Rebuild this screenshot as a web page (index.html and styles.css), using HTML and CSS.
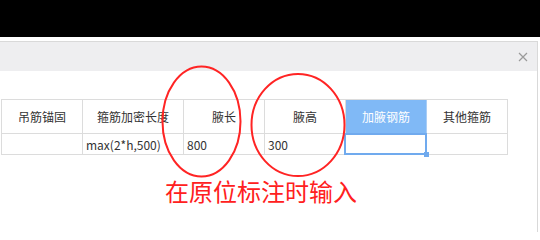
FILE: index.html
```html
<!DOCTYPE html>
<html lang="zh-CN">
<head>
<meta charset="utf-8">
<title>加腋钢筋</title>
<link rel="stylesheet" href="styles.css">
</head>
<body>
<div class="page">
  <div class="topbar"></div>
  <div class="dialog">
    <div class="titlebar">
      <svg class="close" width="10" height="10" viewBox="0 0 10 10"><path d="M1 1 L9 9 M9 1 L1 9" stroke="#9a9a9a" stroke-width="1.2" fill="none"/></svg>
    </div>
    <div class="body">
      <div class="grid">
        <div class="cell head">吊筋锚固</div>
        <div class="cell head">箍筋加密长度</div>
        <div class="cell head">腋长</div>
        <div class="cell head">腋高</div>
        <div class="cell head selected">加腋钢筋</div>
        <div class="cell head">其他箍筋</div>
        <div class="cell data"></div>
        <div class="cell data">max(2*h,500)</div>
        <div class="cell data">800</div>
        <div class="cell data">300</div>
        <div class="cell data active"></div>
        <div class="cell data"></div>
      </div>
      <div class="note">在原位标注时输入</div>
    </div>
  </div>
  <svg class="marks" width="540" height="232" viewBox="0 0 540 232">
    <ellipse cx="201.5" cy="121.5" rx="39" ry="55" fill="none" stroke="#ff2424" stroke-width="2"/>
    <ellipse cx="298" cy="125" rx="46.5" ry="51" fill="none" stroke="#ff2424" stroke-width="2"/>
  </svg>
</div>
</body>
</html>
```

FILE: styles.css
```css
html, body {
  margin: 0;
  padding: 0;
  background: #ffffff;
}
.page {
  position: relative;
  width: 540px;
  height: 232px;
  overflow: hidden;
  font-family: "Noto Sans CJK SC", "Noto Sans", sans-serif;
  font-size: 12px;
  color: #333333;
}
.topbar {
  height: 37px;
  background: #000000;
}
.dialog {
  margin-top: 4px;
  margin-left: -1px;
  width: 539px;
  border: 1px solid #d9d9d9;
  border-bottom: none;
  height: 200px;
  box-sizing: border-box;
}
.titlebar {
  height: 29px;
  background: #eeeef0;
  display: flex;
  align-items: center;
  justify-content: flex-end;
  padding-right: 9px;
}
.close {
  display: block;
  margin-top: 1px;
}
.body {
  padding-top: 28px;
}
.grid {
  display: grid;
  grid-template-columns: 81px 101px 81px 81px 81px 81px;
  grid-template-rows: 34px 21px;
  width: 507px;
  border-left: 1px solid #dcdcdc;
  border-top: 1px solid #dcdcdc;
  box-sizing: border-box;
  margin-left: 1px;
}
.cell {
  border-right: 1px solid #dcdcdc;
  border-bottom: 1px solid #dcdcdc;
  box-sizing: border-box;
  display: flex;
  align-items: center;
  white-space: nowrap;
  line-height: 1;
}
.head {
  justify-content: center;
  padding-top: 1px;
}
.data {
  padding-left: 3px;
  padding-top: 2px;
}
.selected {
  background: #80b9f6;
  color: #ffffff;
  border-right-color: #a9cdf5;
  border-bottom-color: #80b9f6;
}
.active {
  position: relative;
}
.active::after {
  content: "";
  position: absolute;
  left: -2px;
  top: -1px;
  right: -1px;
  bottom: -1px;
  border: 2px solid #70aaee;
}
.active::before {
  content: "";
  position: absolute;
  right: -3px;
  bottom: -3px;
  width: 5px;
  height: 5px;
  background: #70aaee;
  z-index: 1;
}
.note {
  margin-top: 22px;
  padding-left: 165px;
  font-size: 24px;
  line-height: 28px;
  color: #ff2020;
}
.marks {
  position: absolute;
  left: 0;
  top: 0;
  pointer-events: none;
}
```
